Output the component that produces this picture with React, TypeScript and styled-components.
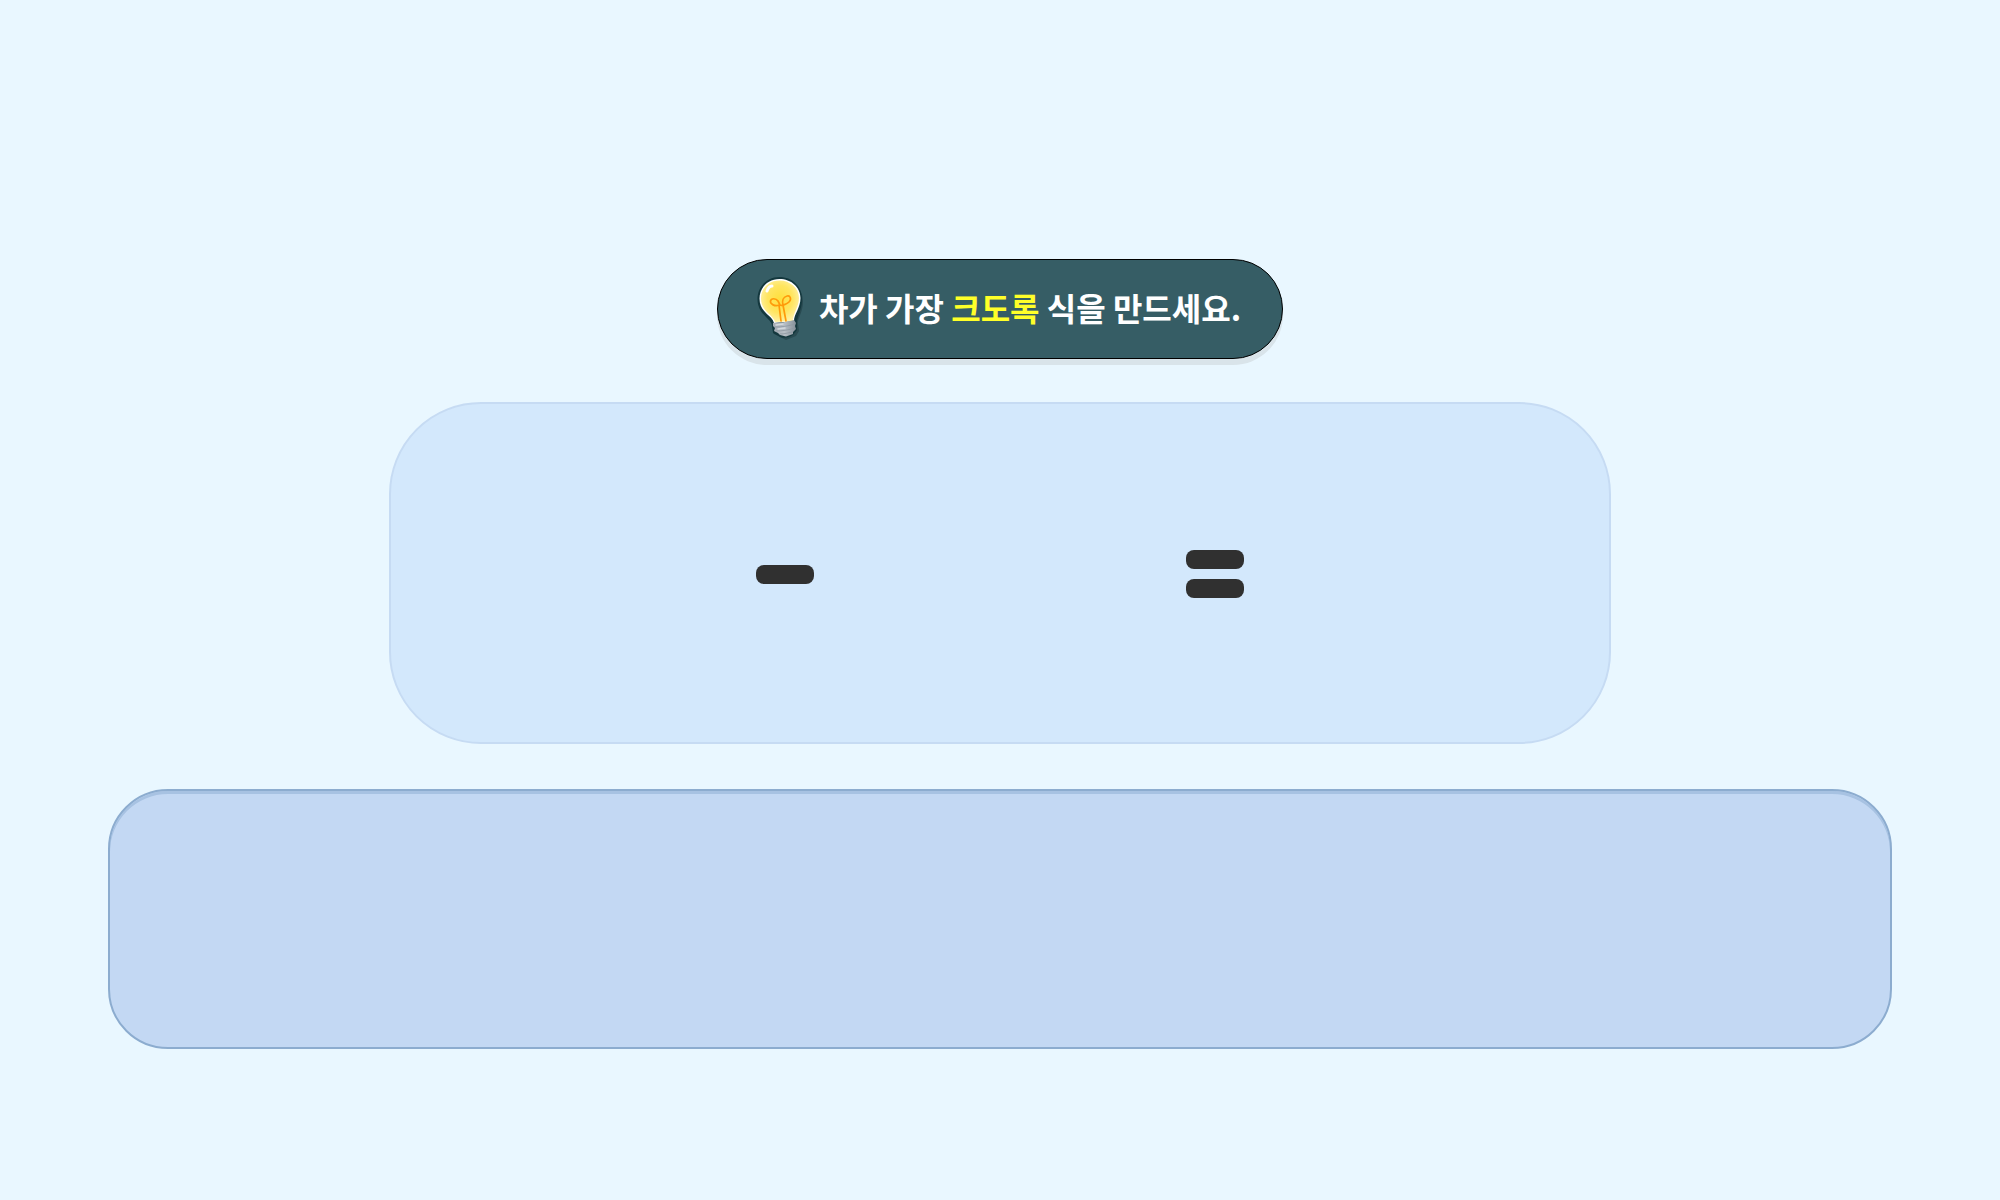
import React from "react";
import styled, { createGlobalStyle } from "styled-components";

const GlobalStyle = createGlobalStyle`
  *, *::before, *::after {
    box-sizing: border-box;
  }
  body {
    margin: 0;
    background: #e9f7ff;
    font-family: "Noto Sans CJK KR", "Noto Sans", sans-serif;
  }
`;

const Stage = styled.main`
  display: flex;
  flex-direction: column;
  align-items: center;
  min-height: 100vh;
  padding: 259px 108px 40px;
`;

const Hint = styled.header`
  display: flex;
  align-items: center;
  gap: 16px;
  height: 100px;
  padding: 0 41px 2px 39px;
  margin-bottom: 43px;
  border: 1px solid #000;
  border-radius: 50px;
  background: #365d65;
  box-shadow: 0 6px 0 #d9e4ea;
`;

const BulbIcon = styled.svg`
  flex: none;
  width: 46px;
  height: 64px;
`;

const HintText = styled.h1`
  margin: 0;
  padding-bottom: 3px;
  color: #fff;
  font-size: 32px;
  font-weight: 700;
  line-height: 48px;
  white-space: nowrap;
`;

const Highlight = styled.em`
  color: #ffff29;
  font-style: normal;
`;

const Equation = styled.section`
  display: grid;
  grid-template-columns: 1fr 58px 372px 58px 1fr;
  align-items: center;
  width: 100%;
  max-width: 1222px;
  height: 342px;
  padding-top: 2px;
  margin-bottom: 45px;
  border: 2px solid #c6dbf3;
  border-radius: 92px;
  background: #d3e8fc;
`;

const Slot = styled.div`
  height: 100%;
`;

const Operator = styled.div`
  display: flex;
  flex-direction: column;
  gap: 10px;
`;

const Bar = styled.span`
  height: 19px;
  border-radius: 8px;
  background: #303030;
`;

const Tray = styled.section`
  width: 100%;
  height: 260px;
  border: 2px solid #8caccf;
  border-radius: 60px;
  background: #c3d8f3;
  box-shadow: inset 0 3px 0 #a7c2e2;
`;

function Bulb() {
  return (
    <BulbIcon viewBox="0 0 46 64" aria-hidden="true">
      <defs>
        <radialGradient id="glass" cx="0.5" cy="0.45" r="0.6">
          <stop offset="0" stopColor="#ffdf3c" />
          <stop offset="0.55" stopColor="#ffe560" />
          <stop offset="1" stopColor="#fff3b0" />
        </radialGradient>
        <linearGradient id="metal" x1="0" y1="0" x2="1" y2="0">
          <stop offset="0" stopColor="#a4abb3" />
          <stop offset="0.5" stopColor="#b7bec5" />
          <stop offset="1" stopColor="#87919a" />
        </linearGradient>
      </defs>
      <path
        d="M23 3C11 3 2 12 2 24C2 33 7 37 11 42C14 46 16 48 17 51L18 58L28 63L38 59L41 54L40 47C39 42 45 36 45 24C45 12 36 3 24 3Z"
        fill="#294a51"
        transform="translate(1 1)"
      />
      <path
        d="M22.500 1C10 1 .5 10.500 .5 23C.5 32 5 37 9 41C13 45 15 47 15 50L16 57C18 59 21 59 23 61C28 63 33 61 36 59L40 54V46C40 40 45 34 45 23C45 10 35 1 22.500 1Z"
        fill="#14383e"
      />
      <path
        d="M22.500 3C11 3 2.500 11.500 2.500 22.500C2.500 31 7 35 11 39C15 42.500 16 44 17 47L37 45C37 38 43.500 32 43.500 22C43.500 11 34 3 22.500 3Z"
        fill="#fff"
      />
      <path
        d="M22.500 4.500C12 4.500 4 12 4 22.500C4 30 8 34 12 38C16 42 17 43 18 46L36 45C36 37 42 31 42 22C42 12 33 4.500 22.500 4.500Z"
        fill="url(#glass)"
      />
      <path
        d="M24 45L22 29C18 31 13 28 13.500 25C14 22 19 22 21 25L23 29C25 30 30 28 32 26C35 23 33 19 30 20C26 21 25 25 26 29L29 45"
        fill="none"
        stroke="#ff9b0a"
        strokeWidth="1.700"
        strokeLinecap="round"
        strokeLinejoin="round"
      />
      <path d="M10 15C11 12 13 10 15 10" fill="none" stroke="#fff" strokeWidth="3" strokeLinecap="round" />
      <path
        d="M16 47C23 47 30 46 37 44L39 47L38 50L39 53L36 56V58L29 60.500L23 59L21 57L17 55L18 52L16 50Z"
        fill="url(#metal)"
      />
      <path
        d="M18 51C25 51 32 50 38 48M19 55C25 55 32 54 38 52M23 58C27 58 31 57 35 56"
        fill="none"
        stroke="#8e98a1"
        strokeWidth="0.800"
      />
      <path d="M19 49L26 48M21 53L28 52" stroke="#d3d9de" strokeWidth="1.500" strokeLinecap="round" />
    </BulbIcon>
  );
}

export default function App() {
  return (
    <>
      <GlobalStyle />
      <Stage>
        <Hint>
          <Bulb />
          <HintText>
            차가 가장 <Highlight>크도록</Highlight> 식을 만드세요.
          </HintText>
        </Hint>
        <Equation>
          <Slot />
          <Operator>
            <Bar />
          </Operator>
          <Slot />
          <Operator>
            <Bar />
            <Bar />
          </Operator>
          <Slot />
        </Equation>
        <Tray />
      </Stage>
    </>
  );
}
